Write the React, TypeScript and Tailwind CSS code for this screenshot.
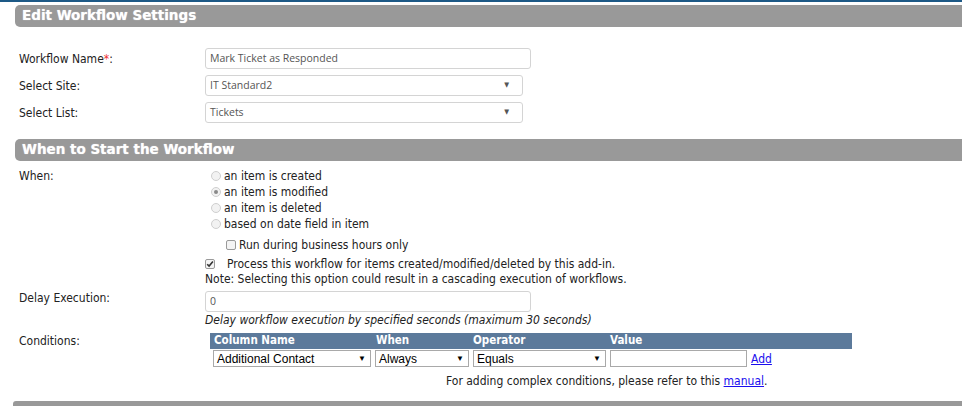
import React from "react";

const F = { fontFamily: '"DejaVu Sans", Verdana, sans-serif', fontStretch: "condensed" } as React.CSSProperties;
const SEG = { fontFamily: '"Open Sans", "Noto Sans", sans-serif', fontStretch: "normal" } as React.CSSProperties;

function Header({ title }: { title: string }) {
  return (
    <div className="ml-[15px] h-[22px] rounded-l-[5px] bg-[#999999] flex items-center pl-[7px]">
      <span
        className="text-white font-bold text-[13.5px] leading-none [text-shadow:0_0_1px_rgba(255,255,255,0.7)]"
        style={{ fontStretch: "normal" }}
      >
        {title}
      </span>
    </div>
  );
}

function Radio({ checked = false, label }: { checked?: boolean; label: string }) {
  return (
    <div className="flex items-center h-[16px]">
      <span className="ml-[6px] mr-[3px] w-[10px] h-[10px] rounded-full border border-[#cfcfcf] bg-[#f2f2f2] flex items-center justify-center">
        {checked && <span className="w-[4px] h-[4px] rounded-full bg-[#8a8a8a]" />}
      </span>
      <span className="text-[12px] text-[#222]">{label}</span>
    </div>
  );
}

function Check({ checked = false }: { checked?: boolean }) {
  return (
    <span className="w-[10px] h-[10px] rounded-[2px] border border-[#9a9a9a] bg-[#f4f4f4] flex items-center justify-center">
      {checked && (
        <svg width="8" height="8" viewBox="0 0 8 8">
          <path d="M1.2 4.2 L3.1 6.1 L6.9 1.6" stroke="#333" strokeWidth="1.6" fill="none" />
        </svg>
      )}
    </span>
  );
}

function TextBox({ value, w }: { value: string; w: string }) {
  return (
    <div className={`${w} h-[21px] rounded-[3px] border border-[#d4d4d4] bg-white flex items-center pl-[4px]`}>
      <span className="text-[10.5px] text-[#555]" style={SEG}>{value}</span>
    </div>
  );
}

function SelectBox({ value, w }: { value: string; w: string }) {
  return (
    <div className={`${w} h-[21px] rounded-[3px] border border-[#d4d4d4] bg-white flex items-center pl-[4px] pr-[13px] justify-between`}>
      <span className="text-[10.5px] text-[#555]" style={SEG}>{value}</span>
      <span className="text-[7px] text-[#555]">▼</span>
    </div>
  );
}

function TSelect({ value, w }: { value: string; w: string }) {
  return (
    <div className={`${w} h-[17px] border border-[#a9a9a9] bg-white flex items-center justify-between pl-[3px] pr-[4px]`} style={{ fontFamily: '"Liberation Sans", Arial, sans-serif', fontStretch: "normal" }}>
      <span className="text-[12px] text-black leading-none">{value}</span>
      <span className="text-[8px] text-black leading-none">▼</span>
    </div>
  );
}

export default function App() {
  return (
    <div className="w-[962px] h-[406px] overflow-hidden bg-white border-t-[2px] border-[#1d5986] text-[#222]" style={F}>
      <div className="pt-[3px]">
        <Header title="Edit Workflow Settings" />
      </div>

      <div className="pl-[19px] mt-[21px] flex flex-col gap-[6px]">
        <div className="flex items-center">
          <div className="w-[186px] text-[12px]">Workflow Name<span className="text-[#e33]">*</span>:</div>
          <TextBox value="Mark Ticket as Responded" w="w-[326px]" />
        </div>
        <div className="flex items-center">
          <div className="w-[186px] text-[12px]">Select Site:</div>
          <SelectBox value="IT Standard2" w="w-[318px]" />
        </div>
        <div className="flex items-center">
          <div className="w-[186px] text-[12px]">Select List:</div>
          <SelectBox value="Tickets" w="w-[318px]" />
        </div>
      </div>

      <div className="mt-[16px]">
        <Header title="When to Start the Workflow" />
      </div>

      <div className="pl-[19px] mt-[6px] flex">
        <div className="w-[186px] text-[12px] leading-[16px] pt-[1px]">When:</div>
        <div className="flex flex-col">
          <div className="pt-[1px]">
            <Radio label="an item is created" />
            <Radio checked label="an item is modified" />
            <Radio label="an item is deleted" />
            <Radio label="based on date field in item" />
          </div>
          <div className="flex items-center h-[16px] mt-[5px] pl-[21px]">
            <Check />
            <span className="ml-[3px] text-[12px]">Run during business hours only</span>
          </div>
          <div className="flex items-center h-[16px] mt-[3px]">
            <Check checked />
            <span className="ml-[12px] text-[12px]">Process this workflow for items created/modified/deleted by this add-in.</span>
          </div>
          <div className="text-[12px] leading-[14px]">Note: Selecting this option could result in a cascading execution of workflows.</div>
        </div>
      </div>

      <div className="pl-[19px] mt-[5px] flex">
        <div className="w-[186px] text-[12px] leading-[14px]">Delay Execution:</div>
        <div className="flex flex-col">
          <TextBox value="0" w="w-[326px]" />
          <div className="text-[12px] italic leading-[15px] mt-[1px]">Delay workflow execution by specified seconds (maximum 30 seconds)</div>
        </div>
      </div>

      <div className="pl-[19px] mt-[5px] flex">
        <div className="w-[186px] text-[12px] leading-[14px] pt-[1px]">Conditions:</div>
        <div className="flex flex-col pl-[5px]">
          <div className="w-[642px] h-[16px] bg-[#5c7a9b] flex items-center text-white font-bold text-[11.5px] leading-none">
            <span className="w-[166px] pl-[4px]">Column Name</span>
            <span className="w-[97px]">When</span>
            <span className="w-[137px]">Operator</span>
            <span>Value</span>
          </div>
          <div className="flex items-center mt-[1px] pl-[3px] gap-[4px]">
            <TSelect value="Additional Contact" w="w-[158px]" />
            <TSelect value="Always" w="w-[94px]" />
            <TSelect value="Equals" w="w-[133px]" />
            <div className="w-[137px] h-[17px] border border-[#a9a9a9] bg-white" />
            <a className="text-[12px] text-[#1a0dee] underline leading-none">Add</a>
          </div>
          <div className="text-[12px] mt-[5px] pl-[236px]">
            For adding complex conditions, please refer to this <a className="text-[#1a0dee] underline">manual</a>.
          </div>
        </div>
      </div>

      <div className="mt-[11px] ml-[13px] h-[6px] rounded-tl-[3px] bg-[#999999]" />
    </div>
  );
}
